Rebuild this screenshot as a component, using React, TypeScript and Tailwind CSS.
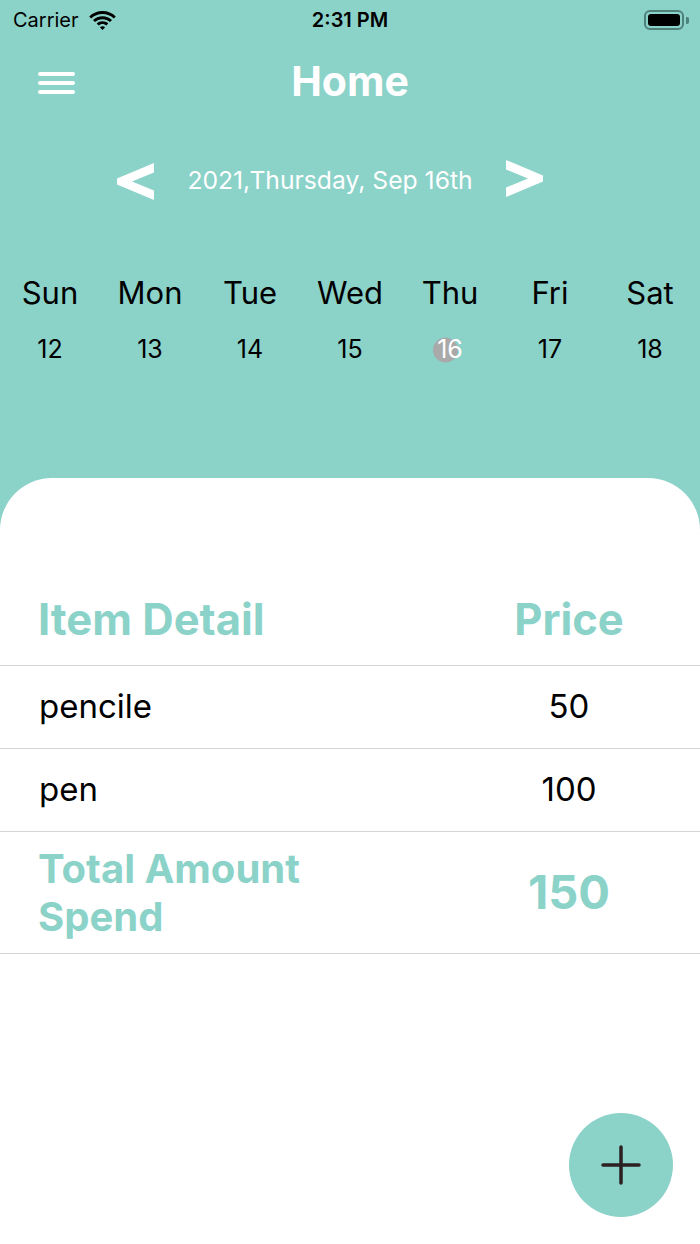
import React from "react";

const days = [
  { name: "Sun", num: "12" },
  { name: "Mon", num: "13" },
  { name: "Tue", num: "14" },
  { name: "Wed", num: "15" },
  { name: "Thu", num: "16", active: true },
  { name: "Fri", num: "17" },
  { name: "Sat", num: "18" },
];

const items = [
  { name: "pencile", price: "50" },
  { name: "pen", price: "100" },
];

const StatusBar = () => (
  <div className="h-[40px] flex items-center justify-between px-[13px] relative">
    <div className="flex items-center gap-[10px]">
      <span className="text-[20px] text-black">Carrier</span>
      <svg width="27" height="19" viewBox="0 0 27 19">
        <path d="M13.5 3c4.4 0 8.3 1.7 11.3 4.5l2-2.1C23.2 2 18.6 0 13.5 0S3.8 2 .2 5.4l2 2.1C5.2 4.7 9.1 3 13.5 3z" fill="#000" />
        <path d="M13.5 8.2c2.9 0 5.5 1.1 7.5 2.9l2-2.1c-2.5-2.3-5.8-3.700-9.5-3.7S6.5 6.7 4 9l2 2.1c2-1.8 4.6-2.9 7.5-2.9z" fill="#000" />
        <path d="M13.5 13.1c1.5 0 2.8.6 3.8 1.5l2-2.1c-1.5-1.4-3.5-2.3-5.8-2.3s-4.3.9-5.8 2.3l2 2.1c1-.9 2.3-1.5 3.8-1.5z" fill="#000" />
        <path d="M13.5 19l2.6-2.7c-.7-.6-1.6-1-2.6-1s-1.9.4-2.6 1z" fill="#000" />
      </svg>
    </div>
    <span className="absolute left-1/2 -translate-x-1/2 text-[20px] font-semibold text-black">2:31 PM</span>
    <div className="flex items-center gap-[2px] mr-[-2px]">
      <div className="w-[40px] h-[20px] rounded-[6px] border-2 border-[#4f817b] p-[2px]">
        <div className="w-full h-full rounded-[3px] bg-black" />
      </div>
      <div className="w-[3px] h-[7px] rounded-r-[2px] bg-[#4f817b]" />
    </div>
  </div>
);

const Chevron = ({ right }: { right?: boolean }) => (
  <svg width="37" height="37" viewBox="0 0 37 37" className={right ? "scale-x-[-1]" : ""}>
    <polygon points="37,0 37,9.5 15,18.5 37,27.5 37,37 0,21.5 0,15.5" fill="#fff" />
  </svg>
);

export default function App() {
  return (
    <div className="w-[700px] h-[1244px] bg-[#8bd2c9] flex flex-col relative overflow-hidden font-['Inter',sans-serif]">
      <StatusBar />

      <div className="h-[84px] flex items-center justify-center relative">
        <div className="absolute left-[38px] top-[32px] flex flex-col gap-[5px]">
          <div className="w-[37px] h-[4px] rounded-full bg-white" />
          <div className="w-[37px] h-[4px] rounded-full bg-white" />
          <div className="w-[37px] h-[4px] rounded-full bg-white" />
        </div>
        <div className="text-[41px] font-bold text-white">Home</div>
      </div>

      <div className="h-[114px] flex items-center justify-center gap-[33px] pr-[40px]">
        <Chevron />
        <div className="text-[24.7px] text-white">2021,Thursday, Sep 16th</div>
        <div className="-mt-[6px]">
          <Chevron right />
        </div>
      </div>

      <div className="pt-[35px] grid grid-cols-7">
        {days.map((d) => (
          <div key={d.name} className="flex flex-col items-center">
            <div className="h-[40px] flex items-center text-[31px] text-black">{d.name}</div>
            <div className="h-[40px] mt-[17px] flex items-center text-[25px]">
              {d.active ? (
                <span className="relative text-white">
                  <span className="absolute left-[-4px] top-1/2 -translate-y-1/2 w-[25px] h-[25px] rounded-full bg-[#a9a9a9]" />
                  <span className="relative">{d.num}</span>
                </span>
              ) : (
                <span className="text-black">{d.num}</span>
              )}
            </div>
          </div>
        ))}
      </div>

      <div className="mt-[108px] flex-1 bg-white rounded-t-[52px] pt-[97px]">
        <div className="h-[91px] flex items-center border-b border-[#d4d4d4]">
          <div className="flex-1 pl-[38px] text-[43.5px] font-bold text-[#8bd2c9]">Item Detail</div>
          <div className="w-[262px] text-center text-[43.5px] font-bold text-[#8bd2c9]">Price</div>
        </div>
        {items.map((it) => (
          <div key={it.name} className="h-[83px] flex items-center border-b border-[#d4d4d4]">
            <div className="flex-1 pl-[39px] text-[33px] text-black">{it.name}</div>
            <div className="w-[262px] text-center text-[33px] text-black">{it.price}</div>
          </div>
        ))}
        <div className="h-[122px] flex items-center border-b border-[#d4d4d4]">
          <div className="flex-1 pl-[38px] text-[40px] leading-[48px] font-bold text-[#8bd2c9]">
            Total Amount
            <br />
            Spend
          </div>
          <div className="w-[262px] text-center text-[47px] font-bold text-[#8bd2c9]">150</div>
        </div>
      </div>

      <button className="absolute left-[569px] top-[1113px] w-[104px] h-[104px] rounded-full bg-[#8bd2c9] flex items-center justify-center">
        <svg width="40" height="40" viewBox="0 0 40 40">
          <path d="M20 2v36M2 20h36" stroke="#2b2122" strokeWidth="3.5" strokeLinecap="round" />
        </svg>
      </button>
    </div>
  );
}
